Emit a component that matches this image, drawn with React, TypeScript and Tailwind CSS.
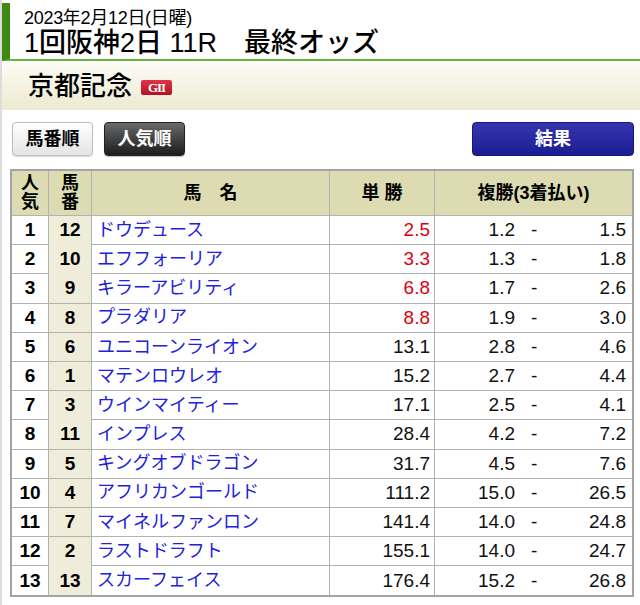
import React from "react";

const rows: [number, number, string, string, string, string][] = [
  [1, 12, "ドウデュース", "2.5", "1.2", "1.5"],
  [2, 10, "エフフォーリア", "3.3", "1.3", "1.8"],
  [3, 9, "キラーアビリティ", "6.8", "1.7", "2.6"],
  [4, 8, "プラダリア", "8.8", "1.9", "3.0"],
  [5, 6, "ユニコーンライオン", "13.1", "2.8", "4.6"],
  [6, 1, "マテンロウレオ", "15.2", "2.7", "4.4"],
  [7, 3, "ウインマイティー", "17.1", "2.5", "4.1"],
  [8, 11, "インプレス", "28.4", "4.2", "7.2"],
  [9, 5, "キングオブドラゴン", "31.7", "4.5", "7.6"],
  [10, 4, "アフリカンゴールド", "111.2", "15.0", "26.5"],
  [11, 7, "マイネルファンロン", "141.4", "14.0", "24.8"],
  [12, 2, "ラストドラフト", "155.1", "14.0", "24.7"],
  [13, 13, "スカーフェイス", "176.4", "15.2", "26.8"],
];

const font = { fontFamily: '"Liberation Sans","Noto Sans CJK JP",sans-serif' };

export default function App() {
  return (
    <div
      className="w-[640px] h-[605px] bg-white border-l-2 border-[#dcdcdc] overflow-hidden text-black"
      style={font}
    >
      {/* header */}
      <div className="mt-[3px] border-l-[8px] border-[#3d8a12] border-b-2 border-b-[#6ab443] h-[58px] pl-[14px] flex flex-col">
        <div className="text-[18px] leading-[21px] mt-[5px] tracking-[-0.3px]">2023年2月12日(日曜)</div>
        <div className="text-[27px] leading-[29px] font-medium">1回阪神2日 11R　最終オッズ</div>
      </div>
      {/* race band */}
      <div className="h-[49px] bg-gradient-to-b from-[#fdfcf6] to-[#ecead0] flex items-center pl-[26px]">
        <span className="text-[26px] leading-[30px] font-medium">京都記念</span>
        <span
          className="ml-[9px] mt-[3px] h-[15px] w-[31px] rounded-[2px] bg-gradient-to-b from-[#e0344a] to-[#b10f24] text-white text-[13px] leading-[15px] font-bold flex items-center justify-center tracking-[-1px]"
          style={{ fontFamily: '"Liberation Serif",serif' }}
        >
          GII
        </span>
      </div>
      {/* buttons */}
      <div className="flex items-center mt-[12px] h-[34px] pl-[10px] pr-[6px]">
        <div className="w-[81px] h-[34px] rounded-[4px] border border-[#bdbdbd] bg-gradient-to-b from-[#ffffff] to-[#e4e4e4] flex items-center justify-center text-[18px] font-bold shadow-[0_1px_1px_rgba(0,0,0,0.15)]">
          馬番順
        </div>
        <div className="ml-[11px] w-[81px] h-[34px] rounded-[4px] border border-[#222] bg-gradient-to-b from-[#6a6a6a] to-[#1e1e1e] flex items-center justify-center text-[18px] font-bold text-white shadow-[0_1px_1px_rgba(0,0,0,0.25)]">
          人気順
        </div>
        <div className="ml-auto w-[162px] h-[34px] rounded-[4px] border border-[#15157a] bg-gradient-to-b from-[#3535b0] to-[#1d1d92] flex items-center justify-center text-[18px] font-bold text-white">
          結果
        </div>
      </div>
      {/* table */}
      <div className="ml-[8px] mt-[13px] w-[624px] border-2 border-[#a3a3a3]">
        <div className="grid grid-cols-[37px_43px_238px_105px_197px] h-[45px] bg-[#dcdbb2] border-b border-[#b2b2b2] font-bold text-[18px]">
          <div className="border-r border-[#b2b2b2] flex flex-col items-center justify-center leading-[19px]">
            <span>人</span>
            <span>気</span>
          </div>
          <div className="border-r border-[#b2b2b2] flex flex-col items-center justify-center leading-[19px]">
            <span>馬</span>
            <span>番</span>
          </div>
          <div className="border-r border-[#b2b2b2] flex items-center justify-center">馬　名</div>
          <div className="border-r border-[#b2b2b2] flex items-center justify-center">単 勝</div>
          <div className="flex items-center justify-center">複勝(3着払い)</div>
        </div>
        {rows.map((r, i) => (
          <div
            key={i}
            className={
              "grid grid-cols-[37px_43px_238px_105px_197px] h-[29.2px] " +
              (i < rows.length - 1 ? "border-b border-[#b2b2b2]" : "")
            }
          >
            <div className="border-r border-[#b2b2b2] flex items-center justify-center font-bold text-[19px]">
              {r[0]}
            </div>
            <div className="border-r border-[#b2b2b2] bg-[#efedda] flex items-center justify-center font-bold text-[19px]">
              {r[1]}
            </div>
            <div className="border-r border-[#b2b2b2] flex items-center pl-[5px] text-[18px] text-[#2020dd]">
              {r[2]}
            </div>
            <div
              className={
                "border-r border-[#b2b2b2] flex items-center justify-end pr-[4px] text-[19px] " +
                (i < 4 ? "text-[#dd0012]" : "text-[#111]")
              }
            >
              {r[3]}
            </div>
            <div className="flex items-center text-[19px] text-[#111]">
              <span className="w-[80px] text-right">{r[4]}</span>
              <span className="ml-[16px]">-</span>
              <span className="ml-auto pr-[6px]">{r[5]}</span>
            </div>
          </div>
        ))}
      </div>
    </div>
  );
}
